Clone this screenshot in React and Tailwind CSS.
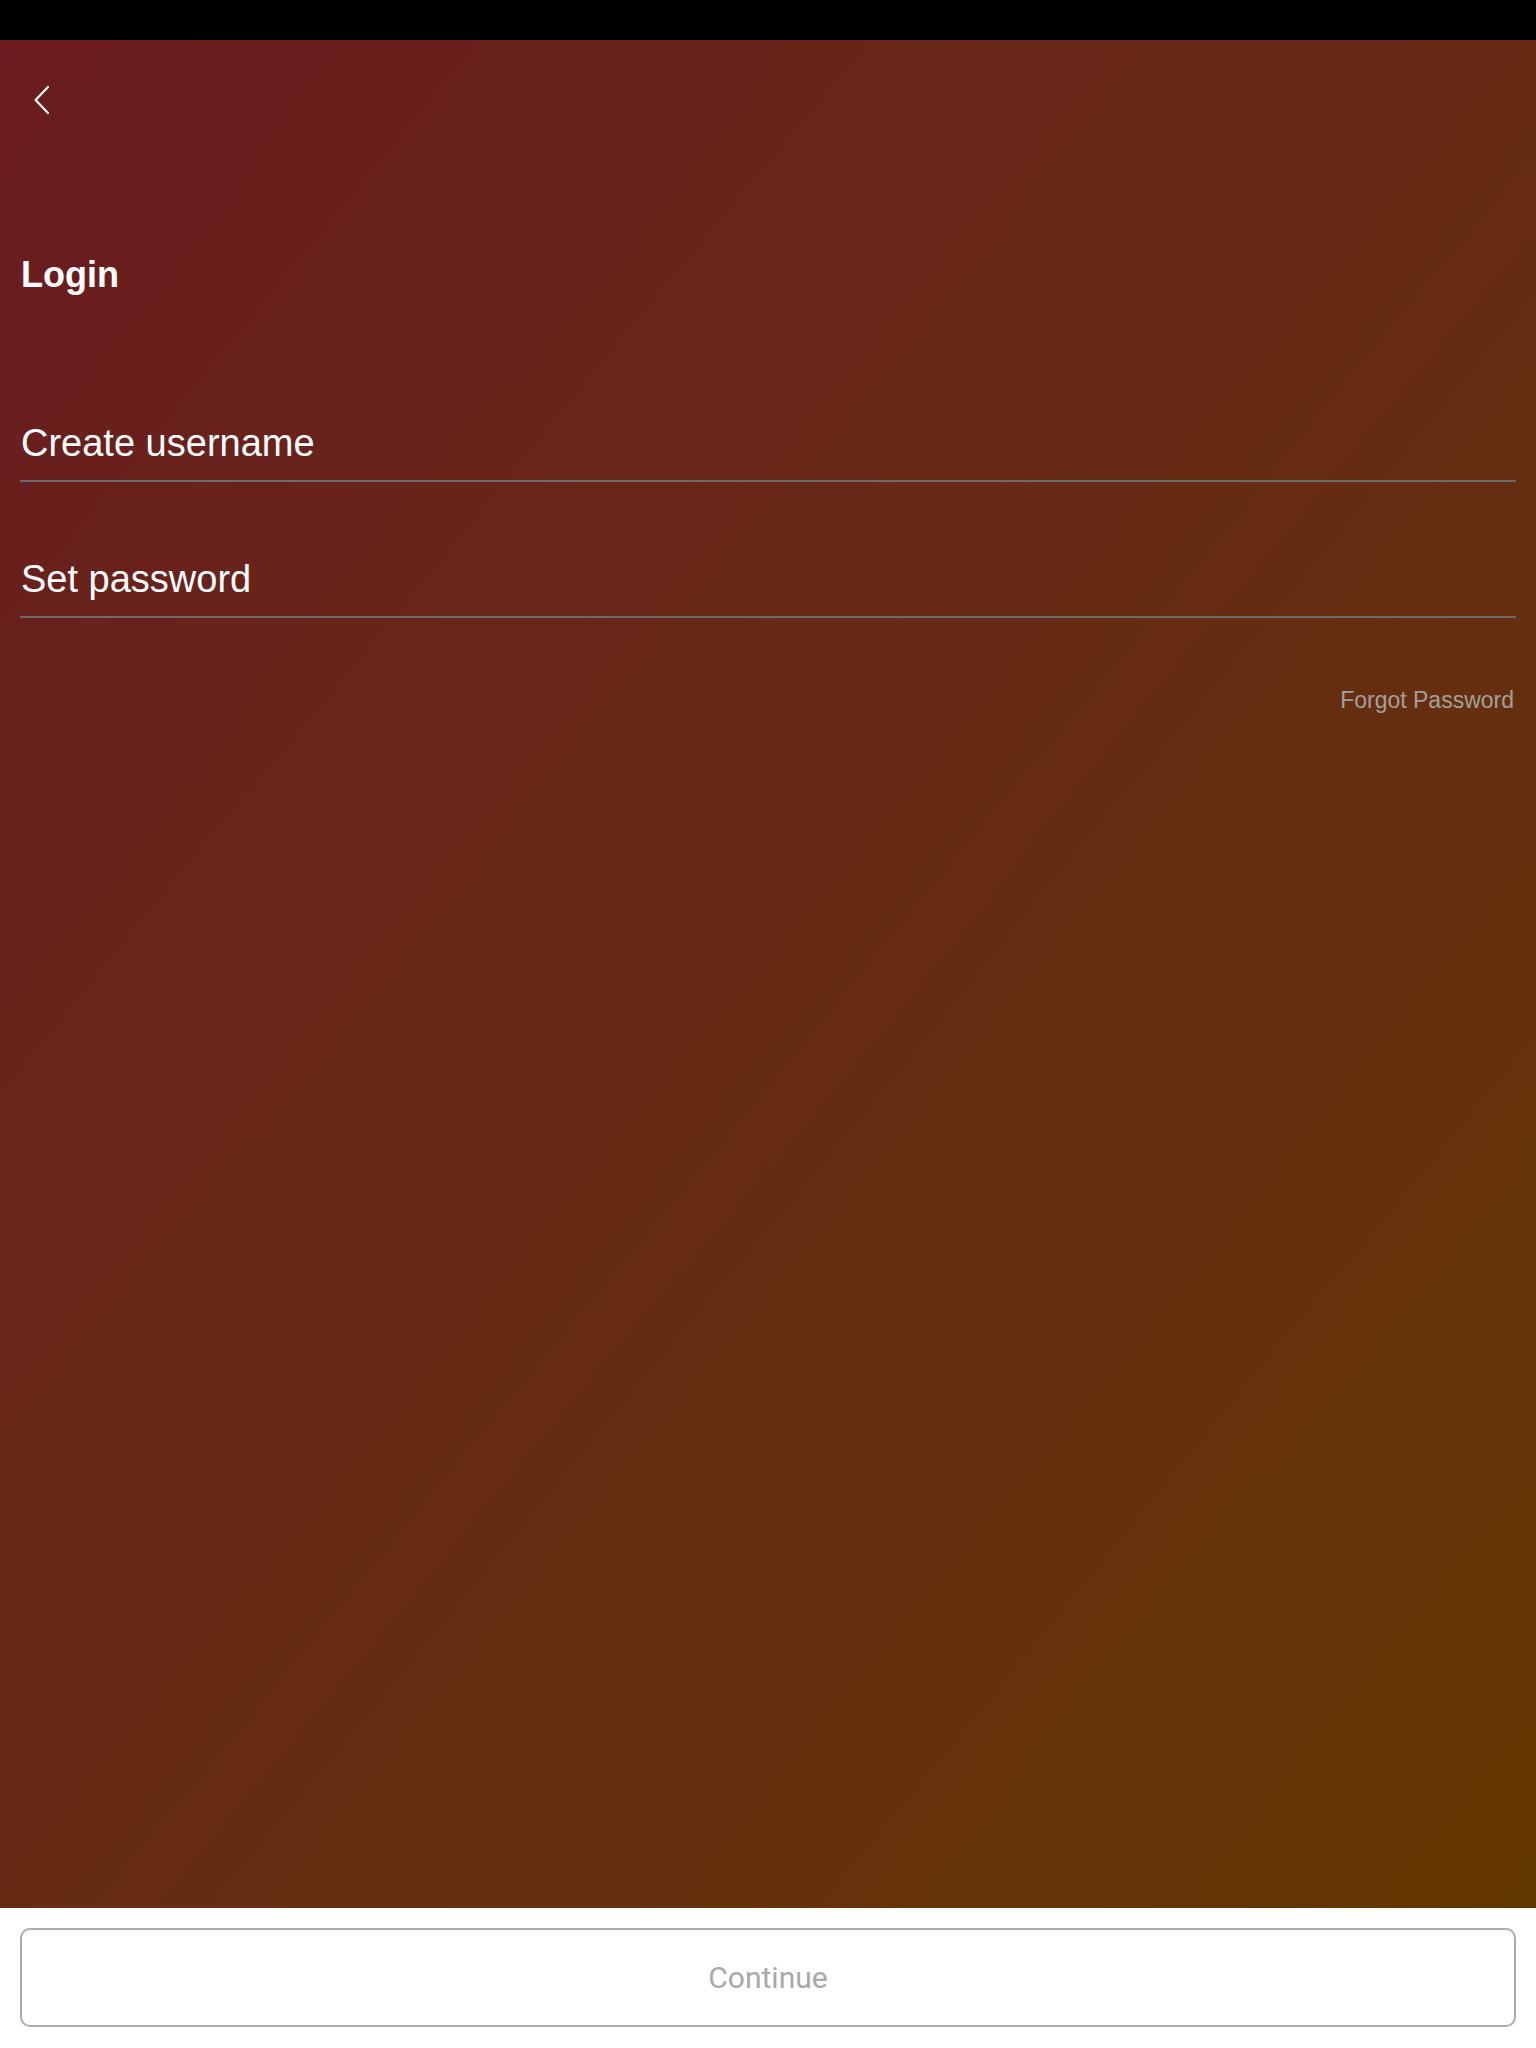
export default function App() {
  return (
    <div className="flex h-[2048px] w-full flex-col bg-white" style={{ fontFamily: '"Liberation Sans", Arial, sans-serif' }}>
      <div className="h-[40px] w-full shrink-0 bg-black" />
      <div className="flex flex-1 flex-col bg-linear-to-br from-[#6a1b1f] to-[#633700] px-[20px]">
        <button type="button" aria-label="Back" className="ml-[14px] mt-[45px] h-[30px] w-[16px] self-start">
          <svg width="16" height="30" viewBox="0 0 16 30" fill="none">
            <path d="M14 2 L1.6 15 L14 28" stroke="#ffffff" strokeWidth="2.2" strokeLinecap="round" strokeLinejoin="round" />
          </svg>
        </button>
        <h1 className="mt-[138px] pl-[1px] text-[36px] font-bold leading-[44px] text-white">Login</h1>
        <div className="mt-[124px] border-b-2 border-[#6b6b6b] pb-[15px]">
          <input
            type="text"
            placeholder="Create username"
            className="block h-[44px] w-full bg-transparent pl-[1px] text-[38px] leading-[44px] text-white outline-none placeholder:text-white"
          />
        </div>
        <div className="mt-[75px] border-b-2 border-[#6b6b6b] pb-[15px]">
          <input
            type="password"
            placeholder="Set password"
            className="block h-[44px] w-full bg-transparent pl-[1px] text-[38px] leading-[44px] text-white outline-none placeholder:text-white"
          />
        </div>
        <div className="mt-[68px] flex justify-end pr-[2px]">
          <span className="text-[23px] leading-[28px] text-[#a3a09c]">Forgot Password</span>
        </div>
      </div>
      <div className="shrink-0 bg-white px-[20px] pb-[21px] pt-[20px]">
        <button
          type="button"
          className="flex h-[99px] w-full items-center justify-center rounded-[10px] border-2 border-[#ababab] bg-white text-[30px] text-[#a9a9a9]"
          style={{ fontFamily: 'Roboto, "Liberation Sans", sans-serif' }}
        >
          Continue
        </button>
      </div>
    </div>
  );
}
